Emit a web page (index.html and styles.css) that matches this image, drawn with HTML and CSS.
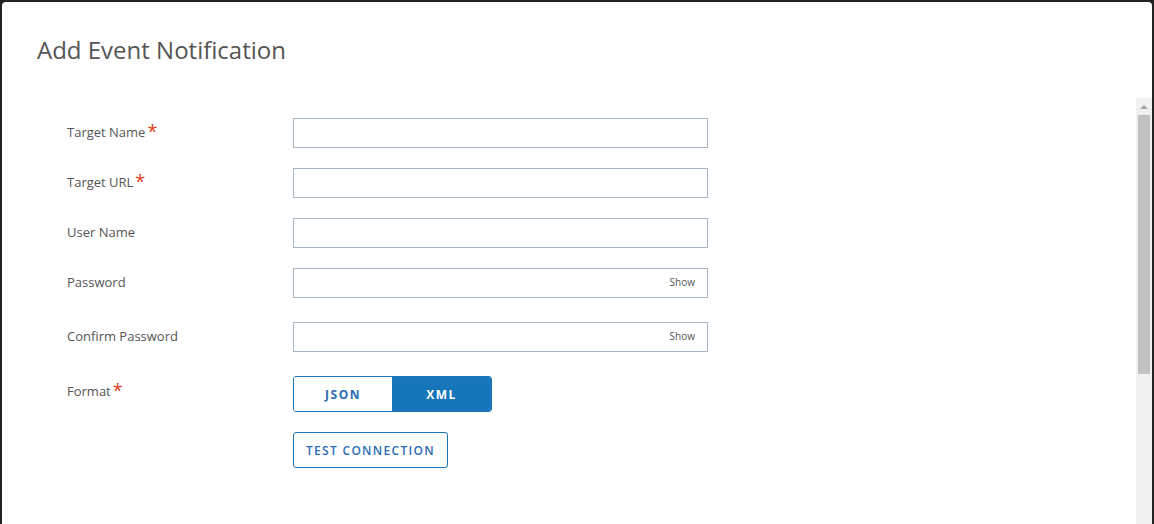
FILE: index.html
```html
<!DOCTYPE html>
<html>
<head>
<meta charset="utf-8">
<link rel="stylesheet" href="styles.css">
</head>
<body>
<div class="modal">
  <div class="modal-header">
    <h1 class="title">Add Event Notification</h1>
  </div>
  <div class="modal-body">
    <form class="form">
      <div class="row">
        <label class="label">Target Name<span class="req">*</span></label>
        <div class="field"><input class="input" type="text"></div>
      </div>
      <div class="row">
        <label class="label">Target URL<span class="req">*</span></label>
        <div class="field"><input class="input" type="text"></div>
      </div>
      <div class="row">
        <label class="label">User Name</label>
        <div class="field"><input class="input" type="text"></div>
      </div>
      <div class="row">
        <label class="label">Password</label>
        <div class="field pw"><input class="input" type="password"><span class="show">Show</span></div>
      </div>
      <div class="row row-wide">
        <label class="label">Confirm Password</label>
        <div class="field pw"><input class="input" type="password"><span class="show">Show</span></div>
      </div>
      <div class="row row-wide">
        <label class="label label-top">Format<span class="req">*</span></label>
        <div class="toggle">
          <button type="button" class="seg seg-json">JSON</button>
          <button type="button" class="seg seg-on">XML</button>
        </div>
      </div>
      <div class="row">
        <span class="label"></span>
        <button type="button" class="btn-outline">TEST CONNECTION</button>
      </div>
    </form>
    <div class="scrollbar">
      <div class="sb-arrow"><span class="sb-tri"></span></div>
      <div class="sb-thumb"></div>
    </div>
  </div>
</div>
</body>
</html>
```

FILE: styles.css
```css
html, body {
  margin: 0;
  height: 100%;
  overflow: hidden;
}
body {
  background: #222;
  padding: 2px 2px 0 2px;
  box-sizing: border-box;
  font-family: "Open Sans", "Liberation Sans", sans-serif;
}
.modal {
  background: #fff;
  border-radius: 4px 4px 0 0;
  height: 100%;
  display: flex;
  flex-direction: column;
}
.modal-header {
  height: 96px;
  flex: none;
  padding-left: 35px;
  box-sizing: border-box;
}
.title {
  margin: 0;
  padding-top: 31px;
  font-size: 24px;
  font-weight: 400;
  color: #555;
  line-height: 34px;
}
.modal-body {
  flex: 1;
  display: flex;
  min-height: 0;
}
.form {
  flex: 1;
  padding: 20px 0 0 65px;
  display: flex;
  flex-direction: column;
  gap: 20px;
}
.row {
  display: flex;
  align-items: center;
}
.row-wide {
  margin-top: 4px;
}
.label {
  width: 226px;
  flex: none;
  font-size: 13px;
  color: #555;
  line-height: 18px;
  padding-bottom: 2px;
}
.label-top {
  margin-top: -4px;
}
.req {
  color: #e23a1a;
  font-size: 18px;
  margin-left: 2px;
  position: relative;
  top: 1px;
  line-height: 10px;
}
.field {
  width: 415px;
  height: 30px;
  display: flex;
  align-items: center;
  border: 1px solid #a9b6c4;
  box-sizing: border-box;
}
.input {
  flex: 1;
  border: 0;
  outline: 0;
  height: 100%;
  padding: 0 8px;
  font: inherit;
  background: transparent;
  min-width: 0;
}
.show {
  font-size: 10px;
  color: #555;
  padding-right: 12px;
  padding-bottom: 2px;
}
.toggle {
  display: flex;
  width: 199px;
  height: 36px;
  border: 1px solid #1a76bb;
  border-radius: 3px;
  box-sizing: border-box;
  overflow: hidden;
}
.seg {
  flex: 1;
  border: 0;
  background: #fff;
  color: #2b6cb4;
  font-family: "Open Sans", "Liberation Sans", sans-serif;
  font-size: 12px;
  font-weight: 700;
  letter-spacing: 1.5px;
  padding: 0;
}
.seg-json {
  flex: none;
  width: 98px;
}
.seg-on {
  background: #1775b9;
  color: #fff;
}
.btn-outline {
  height: 36px;
  padding: 0 12px;
  border: 1px solid #1a76bb;
  border-radius: 3px;
  background: #fff;
  color: #2b6cb4;
  font-family: "Open Sans", "Liberation Sans", sans-serif;
  font-size: 12px;
  font-weight: 600;
  letter-spacing: 1.3px;
}
.scrollbar {
  width: 16px;
  flex: none;
  background: #f0f0f0;
  display: flex;
  flex-direction: column;
  align-items: center;
}
.sb-arrow {
  height: 17px;
  width: 100%;
  display: flex;
  align-items: center;
  justify-content: center;
}
.sb-tri {
  width: 0;
  height: 0;
  border-left: 4px solid transparent;
  border-right: 4px solid transparent;
  border-bottom: 4px solid #a3a3a3;
}
.sb-thumb {
  width: 12px;
  height: 259px;
  background: #c1c1c1;
}
```
